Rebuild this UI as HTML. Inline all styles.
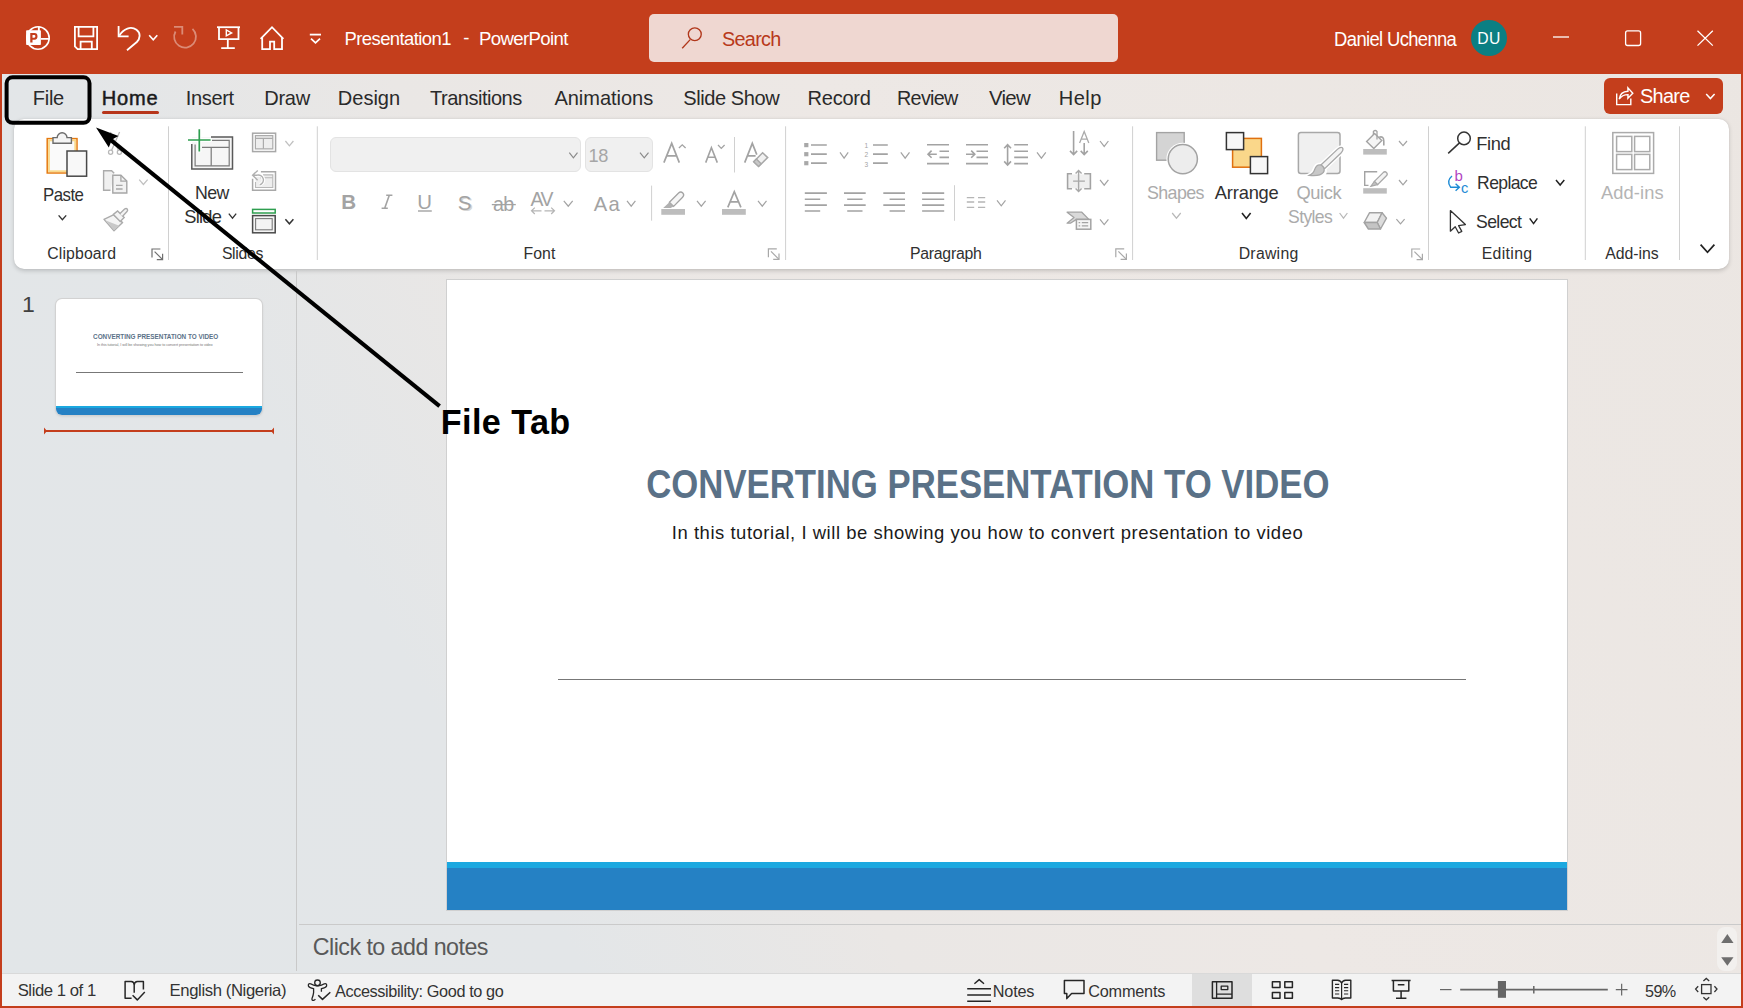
<!DOCTYPE html>
<html><head><meta charset="utf-8"><title>PowerPoint</title>
<style>
html,body{margin:0;padding:0;}
body{width:1743px;height:1008px;overflow:hidden;position:relative;font-family:"Liberation Sans",sans-serif;background:#E6E6E6;}
.a{position:absolute;}
.t{position:absolute;white-space:nowrap;line-height:1;font-family:"Liberation Sans",sans-serif;}
svg.L{position:absolute;left:0;top:0;width:1743px;height:1008px;}
</style></head><body>
<div class="a" style="left:0;top:0;width:1743px;height:1008px;background:linear-gradient(60deg,#E2E6E8 0%,#E3E6E8 26%,#EAE7E5 40%,#EDE8E5 58%,#EBE6E2 100%);"></div>
<!-- title bar -->
<div class="a" style="left:0;top:0;width:1743px;height:74px;background:#C43E1C;"></div>
<div class="a" style="left:649px;top:14px;width:469px;height:48px;border-radius:5px;background:#EFD7D1;"></div>
<div class="a" style="left:1471px;top:20px;width:36px;height:36px;border-radius:50%;background:#0B7F83;"></div>
<div class="a" style="left:102px;top:111px;width:57px;height:3px;border-radius:2px;background:#B7351A;"></div>
<!-- share -->
<div class="a" style="left:1604px;top:78px;width:119px;height:36px;border-radius:6px;background:#C43E1C;"></div>
<!-- ribbon -->
<div class="a" style="left:14px;top:119px;width:1715px;height:150px;border-radius:10px;background:#fff;box-shadow:0 1.5px 4px rgba(0,0,0,0.17),0 0 1px rgba(0,0,0,0.12);"></div>
<!-- font boxes -->
<div class="a" style="left:330px;top:137px;width:251px;height:35px;box-sizing:border-box;border-radius:6px;background:#F0F0F0;border:1px solid #E3E3E3;"></div>
<div class="a" style="left:585px;top:137px;width:68px;height:35px;box-sizing:border-box;border-radius:6px;background:#F0F0F0;border:1px solid #E3E3E3;"></div>
<!-- slide pane -->
<div class="a" style="left:296px;top:271px;width:1px;height:700px;background:#C9C9C9;"></div>
<div class="a" style="left:56px;top:299px;width:206px;height:116px;border-radius:6px;background:#fff;box-shadow:0 0 0 1px #D2D2D2,0 1px 3px rgba(0,0,0,0.15);overflow:hidden;">
  <div class="a" style="left:0;top:107px;width:206px;height:2px;background:#1BA8E0;"></div>
  <div class="a" style="left:0;top:109px;width:206px;height:7px;background:#2581C4;"></div>
  <div class="a" style="left:20px;top:73px;width:167px;height:1px;background:#777;"></div>
</div>
<div class="a" style="left:44px;top:430px;width:230px;height:2px;background:#C43E1C;"></div>
<svg class="L" viewBox="0 0 1743 1008"><path d="M44 427.6 L47 431 L44 434.4 Z M274 427.6 L271 431 L274 434.4 Z" fill="#C43E1C"/></svg>
<!-- slide -->
<div class="a" style="left:446px;top:279px;width:1122px;height:632px;background:#D0D0D0;"></div>
<div class="a" style="left:447px;top:280px;width:1120px;height:630px;background:#fff;"></div>
<div class="a" style="left:447px;top:862px;width:1120px;height:6px;background:#1BA8E0;"></div>
<div class="a" style="left:447px;top:868px;width:1120px;height:42px;background:#2581C4;"></div>
<div class="a" style="left:558px;top:679px;width:908px;height:1px;background:#777;"></div>
<!-- notes -->
<div class="a" style="left:299px;top:924px;width:1442px;height:1px;background:#CACACA;"></div>
<div class="a" style="left:1717px;top:927px;width:20px;height:44px;border-radius:8px;background:#F2F0EE;"></div>
<!-- status bar -->
<div class="a" style="left:0;top:973px;width:1743px;height:35px;background:#F3F3F3;border-top:1px solid #D9D9D9;box-sizing:border-box;"></div>
<div class="a" style="left:1192px;top:974px;width:60px;height:32px;background:#DEDEDE;"></div>
<!-- window border -->
<div class="a" style="left:0;top:0;width:2px;height:1008px;background:#C43E1C;"></div>
<div class="a" style="left:1741px;top:0;width:2px;height:1008px;background:#C43E1C;"></div>
<div class="a" style="left:0;top:1006px;width:1743px;height:2px;background:#C43E1C;"></div>
<svg class="L" viewBox="0 0 1743 1008"><g fill="none" stroke="#fff" stroke-width="1.8">
<circle cx="38" cy="38" r="11.2" stroke-width="1.6"/>
<path d="M38.85 26.5 V31 M41 38.85 H49.5" stroke-width="1.9"/>
</g>
<rect x="26.1" y="30.25" width="14.8" height="14.85" rx="0.8" fill="#fff"/>
<path d="M30.25 42.5 V33 H34.6 Q37.5 33 37.5 36.35 Q37.5 39.7 34.6 39.7 H32.5 V42.5 Z M32.5 34.9 V37.8 H34.2 Q35.4 37.8 35.4 36.35 Q35.4 34.9 34.2 34.9 Z" fill="#C43E1C" fill-rule="evenodd"/>
<g fill="none" stroke="#fff" stroke-width="1.8">
<path d="M74.9 26.9 H97.1 V49.1 H77.6 L74.9 46.4 Z"/>
<path d="M78.6 26.9 V36.3 H93.4 V26.9"/>
<path d="M80.6 49.1 V41.6 H91.8 V49.1"/>
<path d="M118.6 26 V36.4 H128.6"/>
<path d="M119.4 35.6 C123.5 28.5 131 25.8 136.5 29.8 C141 33.2 140.2 38.6 136.8 42 L127 50.2"/>
</g>
<path d="M149.2 35.2 L153.25 39.8 L157.3 35.2" fill="none" stroke="#fff" stroke-width="1.6"/>
<g fill="none" stroke="#fff" stroke-opacity="0.4" stroke-width="1.8">
<path d="M174 26.9 H182.3 V34.6"/>
<path d="M192.5 28.8 A10.9 10.9 0 1 1 175.5 31.5"/>
</g>
<g fill="none" stroke="#fff" stroke-width="1.8">
<path d="M217 27.2 H240"/>
<path d="M219 27.2 V39.2 H238.5 V27.2"/>
<path d="M227.8 39.2 V47.8 M221.2 48.1 H234.8"/>
</g>
<path d="M226.3 30 V35.8 L231.6 32.9 Z" fill="none" stroke="#fff" stroke-width="1.4"/>
<g fill="none" stroke="#fff" stroke-width="1.8">
<path d="M260.6 38.8 L272 27.2 L283.4 38.8"/>
<path d="M262.2 37.4 V49.2 H270 V41.6 H274.2 V49.2 H282 V37.4"/>
<path d="M309.8 34.6 H321"/>
</g>
<path d="M311 38.6 L315.5 42.8 L320 38.6" fill="none" stroke="#fff" stroke-width="1.8"/>
<g fill="none" stroke="#B0361A" stroke-width="1.35"><circle cx="694.8" cy="34.25" r="6.45"/><path d="M690.2 39.6 L682.2 48.2"/></g>
<g fill="none" stroke="#fff" stroke-width="1.3">
<path d="M1553 37 H1569"/>
<rect x="1625.6" y="30.9" width="15" height="14.6" rx="2"/>
<path d="M1697.5 30.7 L1712.8 45.6 M1712.8 30.7 L1697.5 45.6"/>
</g>
<g fill="none" stroke="#fff" stroke-width="1.4" stroke-linejoin="miter">
<path d="M1616.7 93.6 V104.6 H1630.8 V98.6"/>
<path d="M1619.2 99.2 C1619.8 94 1623.4 91.4 1628 91.2 L1627.9 87.8 L1632.8 93.2 L1627.9 98.2 L1628 94.6 C1624 94.6 1621.2 96 1619.2 99.2 Z"/>
</g>
<path d="M1706.2 94 L1710.4 98.6 L1714.6 94" fill="none" stroke="#fff" stroke-width="1.5"/>
<rect x="47.2" y="138.6" width="29.8" height="34.4" fill="#FFFFFF" stroke="#E5790F" stroke-width="1.5"/>
<rect x="49" y="140.4" width="26.2" height="30.8" fill="#FAFAFA" stroke="#F9D98A" stroke-width="1.8"/>
<path d="M53 143.2 V137.6 H57.2 A4.9 4.9 0 0 1 67 137.6 H71.4 V143.2 Z" fill="#F4F4F4" stroke="#6B6B6B" stroke-width="1.4"/>
<rect x="67" y="151" width="19.6" height="25.2" fill="#F8F8F8" stroke="#484848" stroke-width="1.5"/>
<path d="M58.6 215.4 L62.400000000000006 219.6 L66.2 215.4" fill="none" stroke="#333" stroke-width="1.4"/>
<g fill="none" stroke="#B8B8B8" stroke-width="1.3"><circle cx="110.6" cy="152.2" r="2.1"/><circle cx="119.4" cy="152.2" r="2.1"/><path d="M111.6 150.2 L119.6 132 M118.4 150.2 L110.4 132"/></g>
<path d="M110.5 190.3 H103.6 V170.8 H111.6 L114.2 173.2" fill="#F0F0F0" stroke="#ABABAB" stroke-width="1.4"/>
<path d="M112.8 193 V175.2 H120.9 L126.8 181.1 V193 Z" fill="#F2F2F2" stroke="#A6A6A6" stroke-width="1.4"/>
<path d="M120.9 175.2 V181.1 H126.8" fill="none" stroke="#A6A6A6" stroke-width="1.3"/>
<path d="M116 185.4 H122.6 M116 189 H122.6" stroke="#A8A8A8" stroke-width="1.3"/>
<path d="M139.2 179.6 L143.39999999999998 184.4 L147.6 179.6" fill="none" stroke="#C0C0C0" stroke-width="1.3"/>
<path d="M104 219.4 L113.4 214.8 L122.6 222.6 L114 230.8 Z" fill="#F4F4F4" stroke="#ABABAB" stroke-width="1.4" stroke-linejoin="round"/>
<path d="M105.2 220.2 L119.2 225.8 L114 230.2 Z" fill="#C8C8C8"/>
<path d="M113.4 214.4 L117.6 211 L124.2 217.6 L120.2 221.6 Z" fill="#F4F4F4" stroke="#ABABAB" stroke-width="1.4"/>
<path d="M119.8 213.8 L124.6 209 Q126.2 207.8 127.2 209 Q128.2 210.2 127 211.6 L122.4 216.4" fill="#F4F4F4" stroke="#ABABAB" stroke-width="1.4"/>
<g fill="none" stroke="#6F6F6F" stroke-width="1.2"><path d="M152.0 257.4 V249.0 H160.4"/><path d="M154.6 251.6 L162.4 259.4"/><path d="M156.8 259.6 H162.6 V253.8"/></g>
<path d="M168.5 126.3 V260" stroke="#D0D0D0" stroke-width="1"/>
<path d="M317.3 126.3 V260" stroke="#D0D0D0" stroke-width="1"/>
<path d="M785.6 126.3 V260" stroke="#D0D0D0" stroke-width="1"/>
<path d="M1132.6 126.3 V260" stroke="#D0D0D0" stroke-width="1"/>
<path d="M1428.5 126.3 V260" stroke="#D0D0D0" stroke-width="1"/>
<path d="M1585.3 126.3 V260" stroke="#D0D0D0" stroke-width="1"/>
<path d="M1679.5 126.3 V260" stroke="#D0D0D0" stroke-width="1"/>
<rect x="192" y="137" width="40.2" height="32" fill="#F6F6F6" stroke="none"/>
<path d="M211 137.1 H232.5 V169 H191.8 V144" fill="none" stroke="#5A5A5A" stroke-width="1.5"/>
<path d="M212 140.3 H229.2 V165.9 H195.1 V144.4" fill="none" stroke="#7A7A7A" stroke-width="1.2"/>
<path d="M202 147.4 H229 M211.2 147.4 V165.8" fill="none" stroke="#7A7A7A" stroke-width="1.2"/>
<path d="M187.5 140 H211.5 M199.3 128.6 V152.2" stroke="#FFFFFF" stroke-width="4.2"/>
<path d="M188 140 H210.6 M199.3 129.2 V151.5" stroke="#2E9E4F" stroke-width="1.7"/>
<path d="M228.8 213.6 L232.5 218.2 L236.2 213.6" fill="none" stroke="#333" stroke-width="1.3"/>
<rect x="252.6" y="133.2" width="23" height="18.4" fill="#FFFFFF" stroke="#A8A8A8" stroke-width="1.5"/>
<path d="M255.4 135.6 H272.8 V148.8 H255.4 Z" fill="#EEEEEE" stroke="#ABABAB" stroke-width="1.2"/>
<path d="M255.4 138.4 H272.8 M263.4 138.4 V148.8" fill="none" stroke="#ABABAB" stroke-width="1.2"/>
<path d="M285.4 141 L289.4 145.8 L293.4 141" fill="none" stroke="#C0C0C0" stroke-width="1.3"/>
<rect x="255.5" y="174.9" width="17.3" height="12.6" fill="#EEEEEE" stroke="none"/>
<path d="M260.9 171.8 H275.5 V190.2 H252.6 V178.7" fill="none" stroke="#A8A8A8" stroke-width="1.5"/>
<path d="M263 174.9 H272.8 V187.5 H255.5 V182 M260 177.7 H272.8" fill="none" stroke="#B8B8B8" stroke-width="1.1"/>
<path d="M253 175.2 H257 A5 5 0 0 1 259.8 184.8" fill="none" stroke="#FFFFFF" stroke-width="3.6"/>
<path d="M257.8 170.4 L252.6 175.2 L257.6 180.2 M253 175.2 H257 A5 5 0 0 1 259.8 184.8" fill="none" stroke="#B0B0B0" stroke-width="1.4"/>
<rect x="252.6" y="209.4" width="22.6" height="3.6" fill="#FFF" stroke="#2E9E4F" stroke-width="1.5"/>
<rect x="252.6" y="215.6" width="22.6" height="17.2" fill="#F4F4F4" stroke="#4A4A4A" stroke-width="1.5"/>
<rect x="255.6" y="218.6" width="16.6" height="11.2" fill="none" stroke="#7A7A7A" stroke-width="1.1"/>
<path d="M285.4 219.2 L289.4 223.8 L293.4 219.2" fill="none" stroke="#333" stroke-width="1.5"/>
<path d="M569.3 152.6 L573.4 157.8 L577.5 152.6" fill="none" stroke="#8A8A8A" stroke-width="1.2"/>
<path d="M640 152.6 L644.25 157.8 L648.5 152.6" fill="none" stroke="#8A8A8A" stroke-width="1.2"/>
<path d="M663.9 162.6 L671.7 143.4 L679.3 162.6 M666.6 155.9 H676.7" fill="none" stroke="#A3A3A3" stroke-width="1.7"/>
<path d="M678.9 148 L682.25 144.8 L685.6 148" fill="none" stroke="#A3A3A3" stroke-width="1.3"/>
<path d="M705.7 162.6 L711.4 147.6 L717.3 162.6 M707.7 157.2 H715.2" fill="none" stroke="#A3A3A3" stroke-width="1.6"/>
<path d="M718 145 L721.3 148.4 L724.6 145" fill="none" stroke="#A3A3A3" stroke-width="1.3"/>
<path d="M734.5 137 V172.5" stroke="#D0D0D0" stroke-width="1"/>
<path d="M744.7 162.6 L752.3 143.4 L756.8 154.6 M747.4 155.8 H755.6" fill="none" stroke="#A3A3A3" stroke-width="1.7"/>
<path d="M753.7 161.7 L762.6 152.8 L767.7 157.6 L758.6 166.4 Z" fill="#F1F1F1" stroke="#A8A8A8" stroke-width="1.5"/>
<path d="M753.7 161.7 L756.4 159 L761.2 163.7 L758.6 166.4 Z" fill="#C8C8C8" stroke="#A8A8A8" stroke-width="1.3"/>
<text x="341.3" y="208.7" font-family="Liberation Sans" font-size="20.6" fill="#A3A3A3" font-weight="bold">B</text>
<path d="M386.2 195.2 H392.4 M381.6 208.2 H387.8 M389.3 195.2 L384.7 208.2" fill="none" stroke="#A3A3A3" stroke-width="1.6"/>
<text x="417.2" y="208.6" font-family="Liberation Sans" font-size="20.4" fill="#A3A3A3" >U</text>
<path d="M418 211 H431.8" stroke="#A3A3A3" stroke-width="1.4"/>
<text x="459.2" y="211.2" font-family="Liberation Sans" font-size="20.6" fill="#D6D6D6" >S</text>
<text x="457.8" y="209.8" font-family="Liberation Sans" font-size="20.6" fill="#A3A3A3" >S</text>
<text x="493" y="211" font-family="Liberation Sans" font-size="19.6" fill="#A3A3A3" letter-spacing="-0.6">ab</text>
<path d="M491.8 204.6 H515.8" stroke="#A3A3A3" stroke-width="1.3"/>
<text x="530.4" y="205.5" font-family="Liberation Sans" font-size="19.4" fill="#A3A3A3" letter-spacing="-1.4">AV</text>
<g fill="none" stroke="#B5B5B5" stroke-width="1.2"><path d="M531.5 210.8 H541.5 M534.8 207.6 L531.5 210.8 L534.8 214 M544.5 210.8 H554.5 M551.2 207.6 L554.5 210.8 L551.2 214"/></g>
<path d="M563.8 200.8 L568.25 206.2 L572.7 200.8" fill="none" stroke="#A3A3A3" stroke-width="1.2"/>
<text x="593.8" y="210.6" font-family="Liberation Sans" font-size="20.2" fill="#A3A3A3" letter-spacing="1.2">Aa</text>
<path d="M627 200.8 L631.2 206.2 L635.4 200.8" fill="none" stroke="#A3A3A3" stroke-width="1.2"/>
<path d="M651.6 185.6 V220.7" stroke="#D0D0D0" stroke-width="1"/>
<path d="M669.4 202.2 L678.6 193 Q680.8 191 682.8 193 Q684.8 195 682.6 197.2 L673.6 206.4 Z" fill="#F6F6F6" stroke="#A3A3A3" stroke-width="1.3"/>
<path d="M669.4 202.2 L673.6 206.4 L670.6 208 L663.2 208 Z" fill="#B0B0B0"/>
<rect x="661.3" y="209" width="23.7" height="5.8" fill="#BDBDBD"/>
<path d="M697 200.8 L701.3 206.2 L705.6 200.8" fill="none" stroke="#A3A3A3" stroke-width="1.2"/>
<path d="M727.8 207.4 L734.3 191.6 L740.9 207.4 M730.2 201.9 H738.4" fill="none" stroke="#A3A3A3" stroke-width="1.7"/>
<rect x="722" y="209" width="23.8" height="5.8" fill="#BDBDBD"/>
<path d="M758 200.8 L762.25 206.2 L766.5 200.8" fill="none" stroke="#A3A3A3" stroke-width="1.2"/>
<g fill="none" stroke="#A8A8A8" stroke-width="1.2"><path d="M768.4 257.2 V248.79999999999998 H776.8"/><path d="M771.0 251.39999999999998 L778.8 259.2"/><path d="M773.1999999999999 259.4 H779.0 V253.6"/></g>
<g fill="none" stroke="#A3A3A3" stroke-width="1.6">
<path d="M811 145 H826.8 M811 154.1 H826.8 M811 163.1 H826.8"/>
</g>
<g fill="#A8A8A8"><rect x="804.2" y="143" width="4.2" height="4.2"/><rect x="804.2" y="152.1" width="4.2" height="4.2"/><rect x="804.2" y="161.1" width="4.2" height="4.2"/></g>
<path d="M840 152.4 L844.1 158.2 L848.2 152.4" fill="none" stroke="#A3A3A3" stroke-width="1.2"/>
<g fill="none" stroke="#A3A3A3" stroke-width="1.6"><path d="M873 145 H887.8 M873 154.1 H887.8 M873 163.1 H887.8"/></g>
<g font-family="Liberation Sans" font-size="6.6" fill="#A3A3A3"><text x="864.6" y="148.2">1</text><text x="864.6" y="157.4">2</text><text x="864.6" y="166.6">3</text></g>
<path d="M900.8 152.4 L905.15 158.2 L909.5 152.4" fill="none" stroke="#A3A3A3" stroke-width="1.2"/>
<g fill="none" stroke="#A3A3A3" stroke-width="1.6">
<path d="M927 144.8 H949 M939.5 151.2 H949 M939.5 157.4 H949 M927 163.6 H949"/>
<path d="M928 154.2 H936.8 M931.6 150.6 L928 154.2 L931.6 157.8"/>
<path d="M966 144.8 H988 M976.5 151.2 H988 M976.5 157.4 H988 M966 163.6 H988"/>
<path d="M966 154.2 H974.8 M971.2 150.6 L974.8 154.2 L971.2 157.8"/>
<path d="M1014.2 144.8 H1028 M1014.2 151.2 H1028 M1014.2 157.4 H1028 M1014.2 163.6 H1028"/>
<path d="M1007.6 145 V164.8 M1004.2 148.2 L1007.6 144.6 L1011 148.2 M1004.2 161.4 L1007.6 165 L1011 161.4"/>
<path d="M1037 152.4 L1041.4 158.2 L1045.8 152.4" fill="none" stroke="#A3A3A3" stroke-width="1.2"/>
<path d="M804.8 193.1 H826.9 M804.8 199.3 H820.2 M804.8 205.1 H826.9 M804.8 211 H820.2"/>
<path d="M844 193.1 H865.7 M847.2 199.3 H862.5 M844 205.1 H865.7 M847.2 211 H862.5"/>
<path d="M883.3 193.1 H905 M889.6 199.3 H905 M883.3 205.1 H905 M889.6 211 H905"/>
<path d="M922.1 193.1 H944.2 M922.1 199.3 H944.2 M922.1 205.1 H944.2 M922.1 211 H944.2"/>
</g>
<path d="M954.5 185.2 V220.8" stroke="#D0D0D0" stroke-width="1"/>
<g fill="none" stroke="#B5B5B5" stroke-width="1.4"><path d="M966.8 197.6 H974.2 M966.8 202 H974.2 M966.8 207.4 H974.2 M978 197.6 H985.2 M978 202 H985.2 M978 207.4 H985.2"/></g>
<path d="M997 200.4 L1001.25 205.8 L1005.5 200.4" fill="none" stroke="#A3A3A3" stroke-width="1.2"/>
<g fill="none" stroke="#A3A3A3" stroke-width="1.6"><path d="M1073.6 130.9 V154.6 M1070 150.9 L1073.6 154.6 L1077.2 150.9 M1084.2 142.9 V154.6 M1080.7 150.9 L1084.2 154.6 L1087.8 150.9"/></g>
<path d="M1079.6 143 L1084.2 131.6 L1088.8 143 M1081.2 139.1 H1087.2" fill="none" stroke="#ABABAB" stroke-width="1.3"/>
<path d="M1100 141 L1104.2 146.4 L1108.4 141" fill="none" stroke="#A3A3A3" stroke-width="1.2"/>
<rect x="1068.4" y="174.4" width="21.4" height="14" fill="#EFEFEF"/>
<g fill="none" stroke="#A3A3A3" stroke-width="1.6"><path d="M1072 173.8 H1067.6 V188.8 H1072 M1084.2 173.8 H1090.4 V188.8 H1084.2"/></g>
<g fill="none" stroke="#A8A8A8" stroke-width="1.4"><path d="M1073.1 181.1 H1084.9 M1078.6 170.6 V191.6 M1075.6 173.6 L1078.6 170.6 L1081.6 173.6 M1075.6 188.6 L1078.6 191.6 L1081.6 188.6"/></g>
<path d="M1100 179.8 L1104.2 185.2 L1108.4 179.8" fill="none" stroke="#A3A3A3" stroke-width="1.2"/>
<path d="M1067.1 212.2 H1081.8 L1088.9 219.4 H1076.4 L1070.4 223.2 H1067.1 L1074 217.6 Z" fill="#D9D9D9" stroke="#A3A3A3" stroke-width="1.3" stroke-linejoin="round"/>
<rect x="1076.4" y="219.4" width="14.4" height="9.8" fill="#F5F5F5" stroke="#A3A3A3" stroke-width="1.5"/>
<g stroke="#A3A3A3" stroke-width="1.2"><path d="M1078.6 222.6 H1080.2 M1081.8 222.6 H1088.2 M1078.6 225.9 H1080.2 M1081.8 225.9 H1088.2"/></g>
<path d="M1100 219.4 L1104.2 224.6 L1108.4 219.4" fill="none" stroke="#A3A3A3" stroke-width="1.2"/>
<g fill="none" stroke="#A8A8A8" stroke-width="1.2"><path d="M1115.8 257.2 V248.79999999999998 H1124.2"/><path d="M1118.4 251.39999999999998 L1126.2 259.2"/><path d="M1120.6000000000001 259.4 H1126.4 V253.6"/></g>
<rect x="1156.6" y="132.6" width="27.6" height="27.6" fill="#D4D4D4" stroke="#A3A3A3" stroke-width="1.4"/>
<circle cx="1182.8" cy="159.1" r="16.4" fill="#fff"/>
<circle cx="1182.8" cy="159.1" r="14.6" fill="#EDEDED" stroke="#A3A3A3" stroke-width="1.5"/>
<path d="M1172.2 213 L1176.45 218.2 L1180.7 213" fill="none" stroke="#B8B8B8" stroke-width="1.2"/>
<rect x="1232.6" y="138.4" width="28.8" height="28.8" fill="#FAD78A" stroke="#E0700F" stroke-width="1.5"/>
<rect x="1226.4" y="132.6" width="17.2" height="17" fill="#F7F7F7" stroke="#333" stroke-width="1.5"/>
<rect x="1250.4" y="156.6" width="17.2" height="17" fill="#F7F7F7" stroke="#333" stroke-width="1.5"/>
<path d="M1242 213 L1246.3 218.4 L1250.6 213" fill="none" stroke="#222" stroke-width="1.6"/>
<rect x="1298.4" y="132.6" width="41.6" height="40.8" rx="2.5" fill="#F0F0F0" stroke="#A8A8A8" stroke-width="1.5"/>
<path d="M1342.4 147.8 Q1344 149.6 1341 153 L1324.6 168.6 Q1325.8 172 1323.4 174.4 Q1319 178.4 1307.6 176 Q1313.4 173.6 1314.4 169.6 Q1316.4 163.6 1320.8 165 L1337.4 149.4 Q1340.6 146.4 1342.4 147.8 Z" fill="#FFFFFF" stroke="#FFFFFF" stroke-width="4"/>
<path d="M1342.4 147.8 Q1344 149.6 1341 153 L1324.6 168.6 L1320.6 165.2 L1337.4 149.4 Q1340.6 146.4 1342.4 147.8 Z" fill="#F4F4F4" stroke="#A8A8A8" stroke-width="1.3"/>
<path d="M1321.6 165.2 Q1325.6 168.4 1323.4 172.4 Q1320 176.6 1309.2 175.4 Q1313.8 173 1314.6 169.6 Q1316.6 163.8 1321.6 165.2 Z" fill="#C8C8C8" stroke="#A8A8A8" stroke-width="1.3"/>
<path d="M1339.6 213 L1343.5 218.2 L1347.4 213" fill="none" stroke="#B8B8B8" stroke-width="1.2"/>
<path d="M1366.6 141.4 L1374.6 133.4 L1381.8 140.6 L1373.8 148.6 Z" fill="#F5F5F5" stroke="#A3A3A3" stroke-width="1.4"/>
<path d="M1373.4 135 V131.4 Q1375.2 129.6 1377 131.4 V139.6" fill="none" stroke="#A3A3A3" stroke-width="1.3"/>
<path d="M1379.2 137.2 Q1383.6 135.8 1383.8 141 V145.6" fill="none" stroke="#A3A3A3" stroke-width="1.6"/>
<rect x="1363.2" y="149" width="23.6" height="5.6" fill="#BDBDBD"/>
<path d="M1399 141 L1403.0 145.6 L1407 141" fill="none" stroke="#A3A3A3" stroke-width="1.2"/>
<path d="M1377.2 171.8 H1364.7 V185.4 H1368.5" fill="none" stroke="#A3A3A3" stroke-width="1.4"/>
<path d="M1374.4 181.4 L1383.2 172.6 Q1385 171 1386.6 172.6 Q1388 174.2 1386.4 175.8 L1377.6 184.6 Z" fill="#F4F4F4" stroke="#A8A8A8" stroke-width="1.3"/>
<path d="M1374.4 181.4 L1377.6 184.6 L1370.8 186.4 Z" fill="#C0C0C0" stroke="#A8A8A8" stroke-width="1.1"/>
<rect x="1363.2" y="188.2" width="23.6" height="5.4" fill="#BDBDBD"/>
<path d="M1399 180 L1403.0 184.8 L1407 180" fill="none" stroke="#A3A3A3" stroke-width="1.2"/>
<path d="M1364.2 222.5 L1369.6 212.7 H1382.1 L1377.2 222.5 Z" fill="#F2F2F2" stroke="#A3A3A3" stroke-width="1.4" stroke-linejoin="round"/>
<path d="M1382.1 212.7 L1386.5 218.1 L1380.5 229 L1377.2 222.5 Z" fill="#DCDCDC" stroke="#A3A3A3" stroke-width="1.4" stroke-linejoin="round"/>
<path d="M1364.2 222.5 H1377.2 L1380.5 229 H1368.4 Z" fill="#C4C4C4" stroke="#A3A3A3" stroke-width="1.4" stroke-linejoin="round"/>
<path d="M1396.4 219.2 L1400.5 223.8 L1404.6 219.2" fill="none" stroke="#A3A3A3" stroke-width="1.2"/>
<g fill="none" stroke="#A8A8A8" stroke-width="1.2"><path d="M1411.8 257.4 V249.0 H1420.2"/><path d="M1414.4 251.6 L1422.2 259.4"/><path d="M1416.6000000000001 259.6 H1422.4 V253.8"/></g>
<g fill="none" stroke="#333" stroke-width="1.5"><circle cx="1464" cy="138.4" r="6.3"/><path d="M1459.5 142.9 L1448.2 153.4"/></g>
<text x="1454.4" y="181" font-family="Liberation Sans" font-size="15" fill="#B146C2">b</text>
<text x="1461" y="193.4" font-family="Liberation Sans" font-size="14.6" fill="#1E8BD5">c</text>
<g fill="none" stroke="#1E8BD5" stroke-width="1.4"><path d="M1452 176 Q1446 181 1450.6 187.2 H1459.4 M1455.6 183.8 L1459.4 187.2 L1455.6 190.8"/></g>
<path d="M1556 180 L1560.15 185 L1564.3 180" fill="none" stroke="#222" stroke-width="1.5"/>
<path d="M1450.4 210.6 L1450.4 231.2 L1455.2 226.8 L1458.6 233 L1461.8 231.4 L1458.6 225.6 L1465.4 224.6 Z" fill="#fff" stroke="#333" stroke-width="1.3" stroke-linejoin="round"/>
<path d="M1529.7 218.4 L1533.5500000000002 223.6 L1537.4 218.4" fill="none" stroke="#222" stroke-width="1.5"/>
<g fill="none" stroke="#ABABAB" stroke-width="1.5"><rect x="1612.8" y="132.6" width="40.8" height="40.8"/><rect x="1616.6" y="136.4" width="15.2" height="15.2"/><rect x="1634.6" y="136.4" width="15.2" height="15.2"/><rect x="1616.6" y="154.4" width="15.2" height="15.2"/><rect x="1634.6" y="154.4" width="15.2" height="15.2"/></g>
<path d="M1700.6 244.6 L1707.5 252.2 L1714.4 244.6" fill="none" stroke="#222" stroke-width="1.7"/>
<path d="M1721.2 943 L1727.35 934 L1733.5 943 Z" fill="#6E6E6E"/>
<path d="M1721.2 957.3 L1733.5 957.3 L1727.35 965.8 Z" fill="#6E6E6E"/>
<g fill="none" stroke="#262626" stroke-width="1.4" stroke-linejoin="round">
<path d="M131.6 998.3 H125.1 V981.6 H131.2 Q134.2 981.8 134.2 985 V992.8 M134.2 985 Q134.4 981.8 137.4 981.6 H143.4 V989.6" stroke-width="1.5"/>
<path d="M132.6 995.3 L137.3 999.9 L144.8 992.1" stroke-width="1.5"/>
<circle cx="317.5" cy="982.8" r="2.8" stroke-width="1.3"/>
<path d="M317.5 986 Q313 985.6 310.6 983.8 Q308 983.2 308.4 986 Q309 987.6 313.6 988.6 V992.6 Q313.2 995.8 312 998.4 Q311.6 1000.6 313.6 1000.4 Q314.6 1000.2 315.4 999.2" stroke-width="1.3"/>
<path d="M317.5 986 Q322 985.6 324.4 983.8 Q327 983.2 326.6 986 Q326 987.6 321.4 988.6 V991.8" stroke-width="1.3"/>
<path d="M318.2 995.3 L322.5 999.4 L330.3 992.2" stroke-width="1.5"/>
<path d="M974.4 983.8 L979.2 979.6 L984 983.8"/>
<path d="M967.2 988.7 H991 M967.2 995 H991 M967.2 1001.3 H991" stroke-width="1.5"/>
<path d="M1064.4 980.4 H1084 V993.6 H1071.6 L1066.8 998.6 V993.6 H1064.4 Z" stroke-width="1.5"/>
<rect x="1212.4" y="981.8" width="19.6" height="16.4" stroke-width="1.5"/>
<path d="M1216.6 981.8 V998.2 M1216.6 994.2 H1232" stroke-width="1.3"/>
<rect x="1221.2" y="986.2" width="6.6" height="3.4" stroke-width="1.3"/>
<rect x="1272.4" y="981.8" width="7.6" height="5.6" stroke-width="1.5"/><rect x="1284.8" y="981.8" width="7.6" height="5.6" stroke-width="1.5"/>
<rect x="1272.4" y="992.4" width="7.6" height="5.8" stroke-width="1.5"/><rect x="1284.8" y="992.4" width="7.6" height="5.8" stroke-width="1.5"/>
<path d="M1332.4 998 V980.2 H1337.6 Q1340.6 980.4 1341.6 983 Q1342.6 980.4 1345.6 980.2 H1350.8 V998 H1345.4 Q1342.6 998.2 1341.6 999.6 Q1340.6 998.2 1337.8 998 Z" stroke-width="1.4"/>
<path d="M1341.6 983 V999.4" stroke-width="1.2"/>
<path d="M1335 984.4 H1339.2 M1335 987.6 H1339.2 M1335 990.8 H1339.2 M1335 994 H1339.2 M1344 984.4 H1348.2 M1344 987.6 H1348.2 M1344 990.8 H1348.2 M1344 994 H1348.2" stroke-width="1.1"/>
<path d="M1391.6 980.6 H1410.6 M1393.4 980.6 V991 H1408.8 V980.6 M1401.1 991 V998 M1396 998.2 H1406.4 M1397.8 984.8 H1404.4" stroke-width="1.5"/>
</g>
<g stroke="#666" fill="none"><path d="M1440 989.6 H1451.5" stroke-width="1.2"/><path d="M1460.2 989.6 H1607.8" stroke-width="1.6"/><path d="M1533.8 986 V993.6" stroke-width="1.5"/><path d="M1615.8 989.6 H1627.5 M1621.65 983.8 V995.4" stroke-width="1.2"/></g>
<rect x="1497.9" y="981" width="8.1" height="16.8" fill="#666"/>
<g fill="none" stroke="#333" stroke-width="1.3"><rect x="1701.6" y="984.6" width="9.4" height="9"/><path d="M1698.2 986.2 L1695.6 989.1 L1698.2 992 M1714.4 986.2 L1717 989.1 L1714.4 992 M1703.4 981 L1706.3 978.4 L1709.2 981 M1703.4 997.2 L1706.3 999.8 L1709.2 997.2"/></g></svg>
<div class="t" style="left:344.50px;top:29.97px;font-size:18.46px;color:#fff;letter-spacing:-0.567px;">Presentation1</div>
<div class="t" style="left:463.20px;top:29.17px;font-size:18.46px;color:#fff;">-</div>
<div class="t" style="left:479.00px;top:29.97px;font-size:18.46px;color:#fff;letter-spacing:-0.646px;transform:scaleX(1.0095);transform-origin:1.50px 0;">PowerPoint</div>
<div class="t" style="left:722.10px;top:29.17px;font-size:20.35px;color:#B8391B;letter-spacing:-0.712px;transform:scaleX(0.9738);transform-origin:0.90px 0;">Search</div>
<div class="t" style="left:1333.90px;top:29.66px;font-size:19.77px;color:#fff;letter-spacing:-0.692px;transform:scaleX(0.9325);transform-origin:1.60px 0;">Daniel Uchenna</div>
<div class="t" style="left:1477.20px;top:31.11px;font-size:15.70px;color:#fff;letter-spacing:0.400px;">DU</div>
<div class="t" style="left:32.80px;top:88.02px;font-size:20.06px;color:#2a2a2a;letter-spacing:-0.300px;">File</div>
<div class="t" style="left:185.80px;top:88.02px;font-size:20.06px;color:#2a2a2a;letter-spacing:-0.360px;">Insert</div>
<div class="t" style="left:264.20px;top:88.02px;font-size:20.06px;color:#2a2a2a;letter-spacing:-0.267px;">Draw</div>
<div class="t" style="left:337.80px;top:88.02px;font-size:20.06px;color:#2a2a2a;letter-spacing:-0.020px;">Design</div>
<div class="t" style="left:430.00px;top:88.02px;font-size:20.06px;color:#2a2a2a;letter-spacing:-0.500px;">Transitions</div>
<div class="t" style="left:554.40px;top:88.02px;font-size:20.06px;color:#2a2a2a;letter-spacing:-0.033px;">Animations</div>
<div class="t" style="left:683.30px;top:88.02px;font-size:20.06px;color:#2a2a2a;letter-spacing:-0.433px;">Slide Show</div>
<div class="t" style="left:807.60px;top:88.02px;font-size:20.06px;color:#2a2a2a;letter-spacing:-0.260px;">Record</div>
<div class="t" style="left:897.40px;top:88.02px;font-size:20.06px;color:#2a2a2a;letter-spacing:-0.702px;transform:scaleX(0.9855);transform-origin:1.60px 0;">Review</div>
<div class="t" style="left:988.90px;top:88.02px;font-size:20.06px;color:#2a2a2a;letter-spacing:-0.702px;transform:scaleX(1.0173);transform-origin:0.10px 0;">View</div>
<div class="t" style="left:1058.80px;top:88.02px;font-size:20.06px;color:#2a2a2a;letter-spacing:0.467px;">Help</div>
<div class="t" style="left:101.80px;top:88.02px;font-size:20.06px;color:#1a1a1a;letter-spacing:0.833px;-webkit-text-stroke:0.5px #1a1a1a;">Home</div>
<div class="t" style="left:1639.60px;top:86.37px;font-size:20.35px;color:#fff;letter-spacing:-0.712px;transform:scaleX(0.9790);transform-origin:0.90px 0;">Share</div>
<div class="t" style="left:42.90px;top:186.09px;font-size:18.31px;color:#303030;letter-spacing:-0.641px;transform:scaleX(0.9207);transform-origin:1.50px 0;">Paste</div>
<div class="t" style="left:47.20px;top:246.39px;font-size:15.84px;color:#303030;letter-spacing:0.125px;">Clipboard</div>
<div class="t" style="left:195.10px;top:184.02px;font-size:18.17px;color:#303030;letter-spacing:-0.636px;transform:scaleX(0.9784);transform-origin:1.50px 0;">New</div>
<div class="t" style="left:184.20px;top:207.69px;font-size:18.31px;color:#303030;letter-spacing:-0.725px;">Slide</div>
<div class="t" style="left:221.90px;top:246.39px;font-size:15.84px;color:#303030;letter-spacing:-0.340px;">Slides</div>
<div class="t" style="left:588.60px;top:146.62px;font-size:18.17px;color:#A6A6A6;letter-spacing:-0.500px;">18</div>
<div class="t" style="left:523.50px;top:245.99px;font-size:15.84px;color:#303030;letter-spacing:0.067px;">Font</div>
<div class="t" style="left:909.90px;top:245.99px;font-size:15.84px;color:#303030;letter-spacing:-0.238px;">Paragraph</div>
<div class="t" style="left:1147.40px;top:184.29px;font-size:18.31px;color:#ABABAB;letter-spacing:-0.641px;transform:scaleX(0.9758);transform-origin:0.80px 0;">Shapes</div>
<div class="t" style="left:1214.80px;top:184.29px;font-size:18.31px;color:#303030;letter-spacing:-0.183px;">Arrange</div>
<div class="t" style="left:1296.40px;top:184.29px;font-size:18.31px;color:#ABABAB;letter-spacing:-0.350px;">Quick</div>
<div class="t" style="left:1288.20px;top:208.29px;font-size:18.31px;color:#ABABAB;letter-spacing:-0.641px;transform:scaleX(0.9603);transform-origin:0.80px 0;">Styles</div>
<div class="t" style="left:1238.70px;top:245.99px;font-size:15.84px;color:#303030;letter-spacing:0.250px;">Drawing</div>
<div class="t" style="left:1476.30px;top:135.29px;font-size:18.31px;color:#303030;letter-spacing:-0.433px;">Find</div>
<div class="t" style="left:1476.50px;top:174.09px;font-size:18.31px;color:#303030;letter-spacing:-0.641px;transform:scaleX(0.9598);transform-origin:1.50px 0;">Replace</div>
<div class="t" style="left:1476.40px;top:213.79px;font-size:17.73px;color:#303030;letter-spacing:-0.621px;transform:scaleX(0.9956);transform-origin:0.80px 0;">Select</div>
<div class="t" style="left:1481.70px;top:246.39px;font-size:15.84px;color:#303030;letter-spacing:0.333px;">Editing</div>
<div class="t" style="left:1601.00px;top:184.29px;font-size:18.31px;color:#B4B4B4;letter-spacing:0.100px;">Add-ins</div>
<div class="t" style="left:1605.20px;top:246.39px;font-size:15.84px;color:#303030;letter-spacing:-0.033px;">Add-ins</div>
<div class="t" style="left:22.05px;top:292.76px;font-size:22.97px;color:#404040;">1</div>
<div class="t" style="left:92.50px;top:332.70px;font-size:7.56px;color:#5A7187;font-weight:bold;letter-spacing:0.000px;transform:scaleX(0.8435);transform-origin:0.30px 0;">CONVERTING PRESENTATION TO VIDEO</div>
<div class="t" style="left:97.00px;top:343.70px;font-size:3.78px;color:#777;letter-spacing:-0.065px;">In this tutorial, I will be showing you how to convert presentation to video</div>
<div class="t" style="left:646.40px;top:465.03px;font-size:40.12px;color:#5A7187;font-weight:bold;letter-spacing:0.000px;transform:scaleX(0.8661);transform-origin:1.60px 0;">CONVERTING PRESENTATION TO VIDEO</div>
<div class="t" style="left:671.80px;top:523.97px;font-size:18.46px;color:#1a1a1a;letter-spacing:0.541px;">In this tutorial, I will be showing you how to convert presentation to video</div>
<div class="t" style="left:440.70px;top:404.88px;font-size:34.16px;color:#000;font-weight:bold;letter-spacing:0.429px;">File Tab</div>
<div class="t" style="left:312.80px;top:936.31px;font-size:23.26px;color:#595959;letter-spacing:-0.541px;">Click to add notes</div>
<div class="t" style="left:17.70px;top:983.25px;font-size:16.72px;color:#333;letter-spacing:-0.455px;">Slide 1 of 1</div>
<div class="t" style="left:169.60px;top:983.25px;font-size:16.72px;color:#333;letter-spacing:-0.406px;">English (Nigeria)</div>
<div class="t" style="left:335.00px;top:982.62px;font-size:16.28px;color:#333;letter-spacing:-0.387px;">Accessibility: Good to go</div>
<div class="t" style="left:992.70px;top:983.22px;font-size:16.28px;color:#333;letter-spacing:-0.175px;">Notes</div>
<div class="t" style="left:1088.20px;top:983.22px;font-size:16.28px;color:#333;letter-spacing:-0.214px;">Comments</div>
<div class="t" style="left:1644.80px;top:983.22px;font-size:16.28px;color:#333;letter-spacing:-0.570px;transform:scaleX(0.9947);transform-origin:0.70px 0;">59%</div>
<svg class="L" viewBox="0 0 1743 1008">
<rect x="6.6" y="77.3" width="82.9" height="45.5" rx="6" fill="none" stroke="#000" stroke-width="4"/>
<line x1="439.6" y1="406.2" x2="110" y2="139.3" stroke="#000" stroke-width="4.1"/>
<path d="M96 127.4 L118.5 136 L112 139.5 L108.8 147.5 Z" fill="#000"/>
</svg>
</body></html>
